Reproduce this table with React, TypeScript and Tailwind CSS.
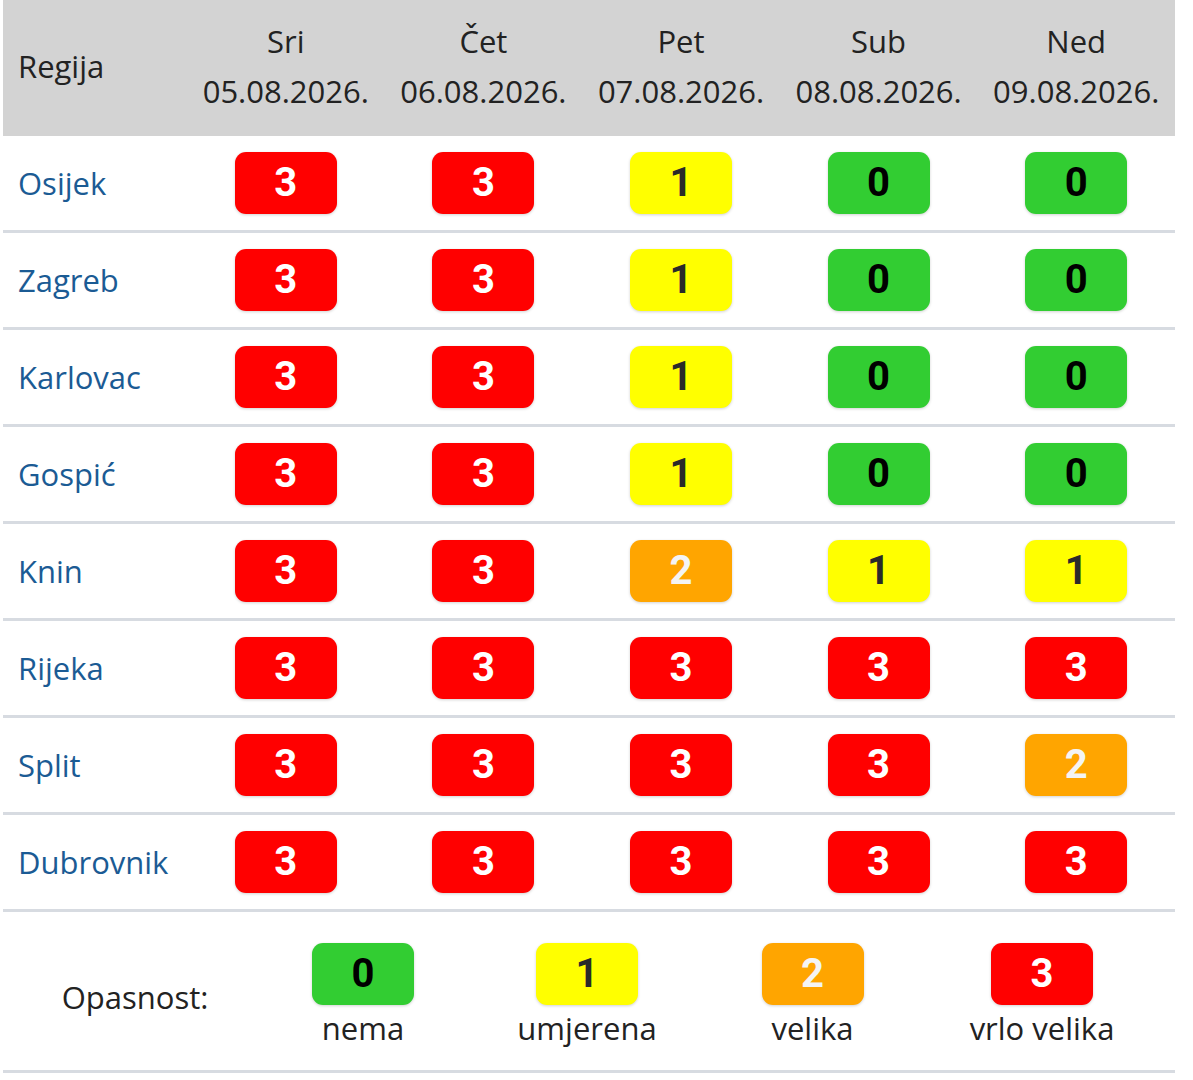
import React from "react";

type Level = 0 | 1 | 2 | 3;

const days = [
  { d: "Sri", date: "05.08.2026." },
  { d: "Čet", date: "06.08.2026." },
  { d: "Pet", date: "07.08.2026." },
  { d: "Sub", date: "08.08.2026." },
  { d: "Ned", date: "09.08.2026." },
];

const rows: { name: string; v: Level[] }[] = [
  { name: "Osijek", v: [3, 3, 1, 0, 0] },
  { name: "Zagreb", v: [3, 3, 1, 0, 0] },
  { name: "Karlovac", v: [3, 3, 1, 0, 0] },
  { name: "Gospić", v: [3, 3, 1, 0, 0] },
  { name: "Knin", v: [3, 3, 2, 1, 1] },
  { name: "Rijeka", v: [3, 3, 3, 3, 3] },
  { name: "Split", v: [3, 3, 3, 3, 2] },
  { name: "Dubrovnik", v: [3, 3, 3, 3, 3] },
];

const badgeCls: Record<Level, string> = {
  0: "bg-[#32cd32] text-black",
  1: "bg-[#ffff00] text-[#2a2a2a]",
  2: "bg-[#ffa500] text-[#f4f4f4]",
  3: "bg-[#ff0000] text-white",
};

function Badge({ v }: { v: Level }) {
  return (
    <div
      className={`w-[102px] h-[62px] rounded-[11px] flex items-center justify-center text-[40px] font-bold leading-none shadow-[0_1px_3px_rgba(0,0,0,0.18)] ${badgeCls[v]}`}
      style={{ fontFamily: "Roboto, 'Open Sans', sans-serif" }}
    >
      {v}
    </div>
  );
}

export default function App() {
  return (
    <div
      className="bg-white min-h-[1080px] w-[1193px] text-[31px] text-[#222]"
      style={{ fontFamily: "'Open Sans', 'Noto Sans', sans-serif" }}
    >
      <div className="ml-[3px] w-[1172px]">
        <div className="grid grid-cols-[184px_repeat(5,1fr)] bg-[#d3d3d3] h-[136px] pb-[4px]">
          <div className="flex items-center pl-[15px] text-[#222]">Regija</div>
          {days.map((d) => (
            <div key={d.date} className="flex flex-col items-center justify-center leading-[50px] text-[#222]">
              <span>{d.d}</span>
              <span>{d.date}</span>
            </div>
          ))}
        </div>
        {rows.map((r) => (
          <div
            key={r.name}
            className="grid grid-cols-[184px_repeat(5,1fr)] h-[97px] border-b-[3px] border-[#d7dbe1]"
          >
            <div className="flex items-center pl-[15px] text-[#1b5b94]">{r.name}</div>
            {r.v.map((v, i) => (
              <div key={i} className="flex items-center justify-center">
                <Badge v={v} />
              </div>
            ))}
          </div>
        ))}
        <div className="grid grid-cols-[248px_224px_224px_227px_232px] pt-[31px] pb-[19px] border-b-[3px] border-[#d7dbe1]">
          <div className="flex items-center justify-center pl-[16px] text-[#222]">Opasnost:</div>
          {([
            [0, "nema"],
            [1, "umjerena"],
            [2, "velika"],
            [3, "vrlo velika"],
          ] as [Level, string][]).map(([v, label]) => (
            <div key={label} className="flex flex-col items-center">
              <Badge v={v} />
              <span className="leading-[46px] text-[#222]">{label}</span>
            </div>
          ))}
        </div>
      </div>
    </div>
  );
}
